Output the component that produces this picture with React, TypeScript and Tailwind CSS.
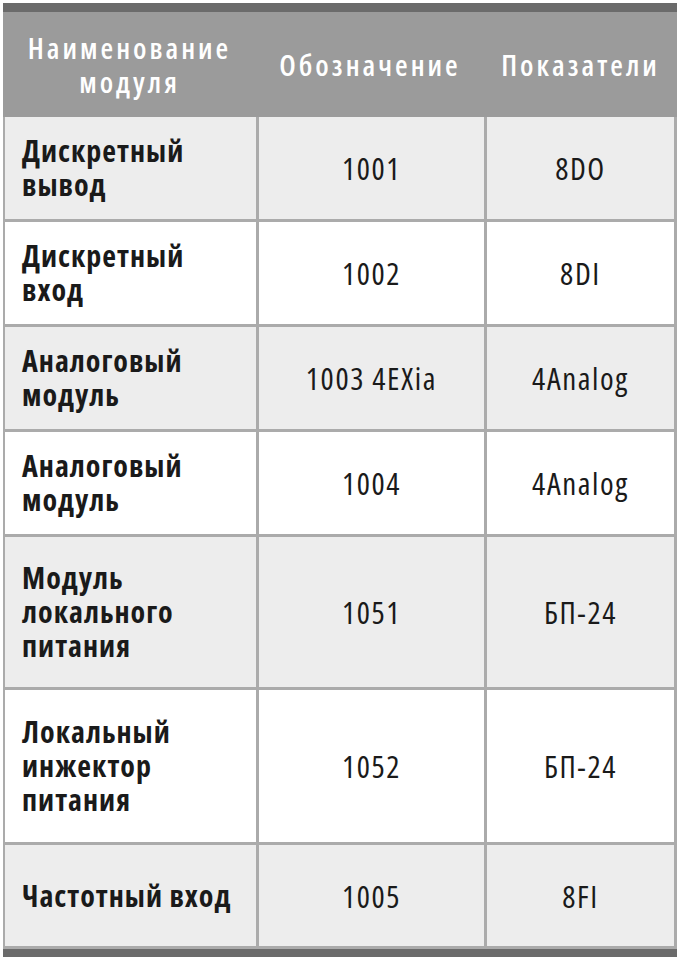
const rows = [
  { name: ["Дискретный", "вывод"], code: "1001", spec: "8DO", h: "h-[105px]" },
  { name: ["Дискретный", "вход"], code: "1002", spec: "8DI", h: "h-[105px]" },
  { name: ["Аналоговый", "модуль"], code: "1003 4EXia", spec: "4Analog", h: "h-[105px]" },
  { name: ["Аналоговый", "модуль"], code: "1004", spec: "4Analog", h: "h-[105px]" },
  { name: ["Модуль", "локального", "питания"], code: "1051", spec: "БП-24", h: "h-[153px]" },
  { name: ["Локальный", "инжектор", "питания"], code: "1052", spec: "БП-24", h: "h-[155px]" },
  { name: ["Частотный вход"], code: "1005", spec: "8FI", h: "h-[104px]" },
];

export default function App() {
  return (
    <div
      className="w-[683px] h-[962px] bg-white pt-[3px] px-[3px] [font-stretch:75%]"
      style={{ fontFamily: '"Open Sans", "Liberation Sans", sans-serif' }}
    >
      <div className="w-[674px]">
        <div className="h-[9px] bg-[#6b6b6b]" />
        <div className="grid grid-cols-[253px_228px_193px] h-[105px] bg-[#9b9b9b] text-white font-semibold text-[29px] leading-[34px] tracking-[3px]">
          <div className="flex items-center justify-center text-center">
            Наименование
            <br />
            модуля
          </div>
          <div className="flex items-center justify-center">Обозначение</div>
          <div className="flex items-center justify-center">Показатели</div>
        </div>
        {rows.map((r, i) => (
          <div
            key={i}
            className={`grid grid-cols-[251px_228px_193px] ${r.h} border-l-2 border-b-[3px] border-[#ababab] text-[#1a1a1a] text-[31px] leading-[34px] ${
              i % 2 === 0 ? "bg-[#ededed]" : "bg-white"
            }`}
          >
            <div className="flex flex-col justify-center pl-[17px] font-bold text-[30px] tracking-[1px]">
              {r.name.map((l, j) => (
                <span key={j}>{l}</span>
              ))}
            </div>
            <div className="flex items-center justify-center border-l-[3px] border-[#ababab] tracking-[1.6px]">
              {r.code}
            </div>
            <div className="flex items-center justify-center border-l-[3px] border-r-[3px] border-[#ababab] tracking-[1.6px]">
              {r.spec}
            </div>
          </div>
        ))}
        <div className="h-[8px] bg-[#6b6b6b]" />
      </div>
    </div>
  );
}
